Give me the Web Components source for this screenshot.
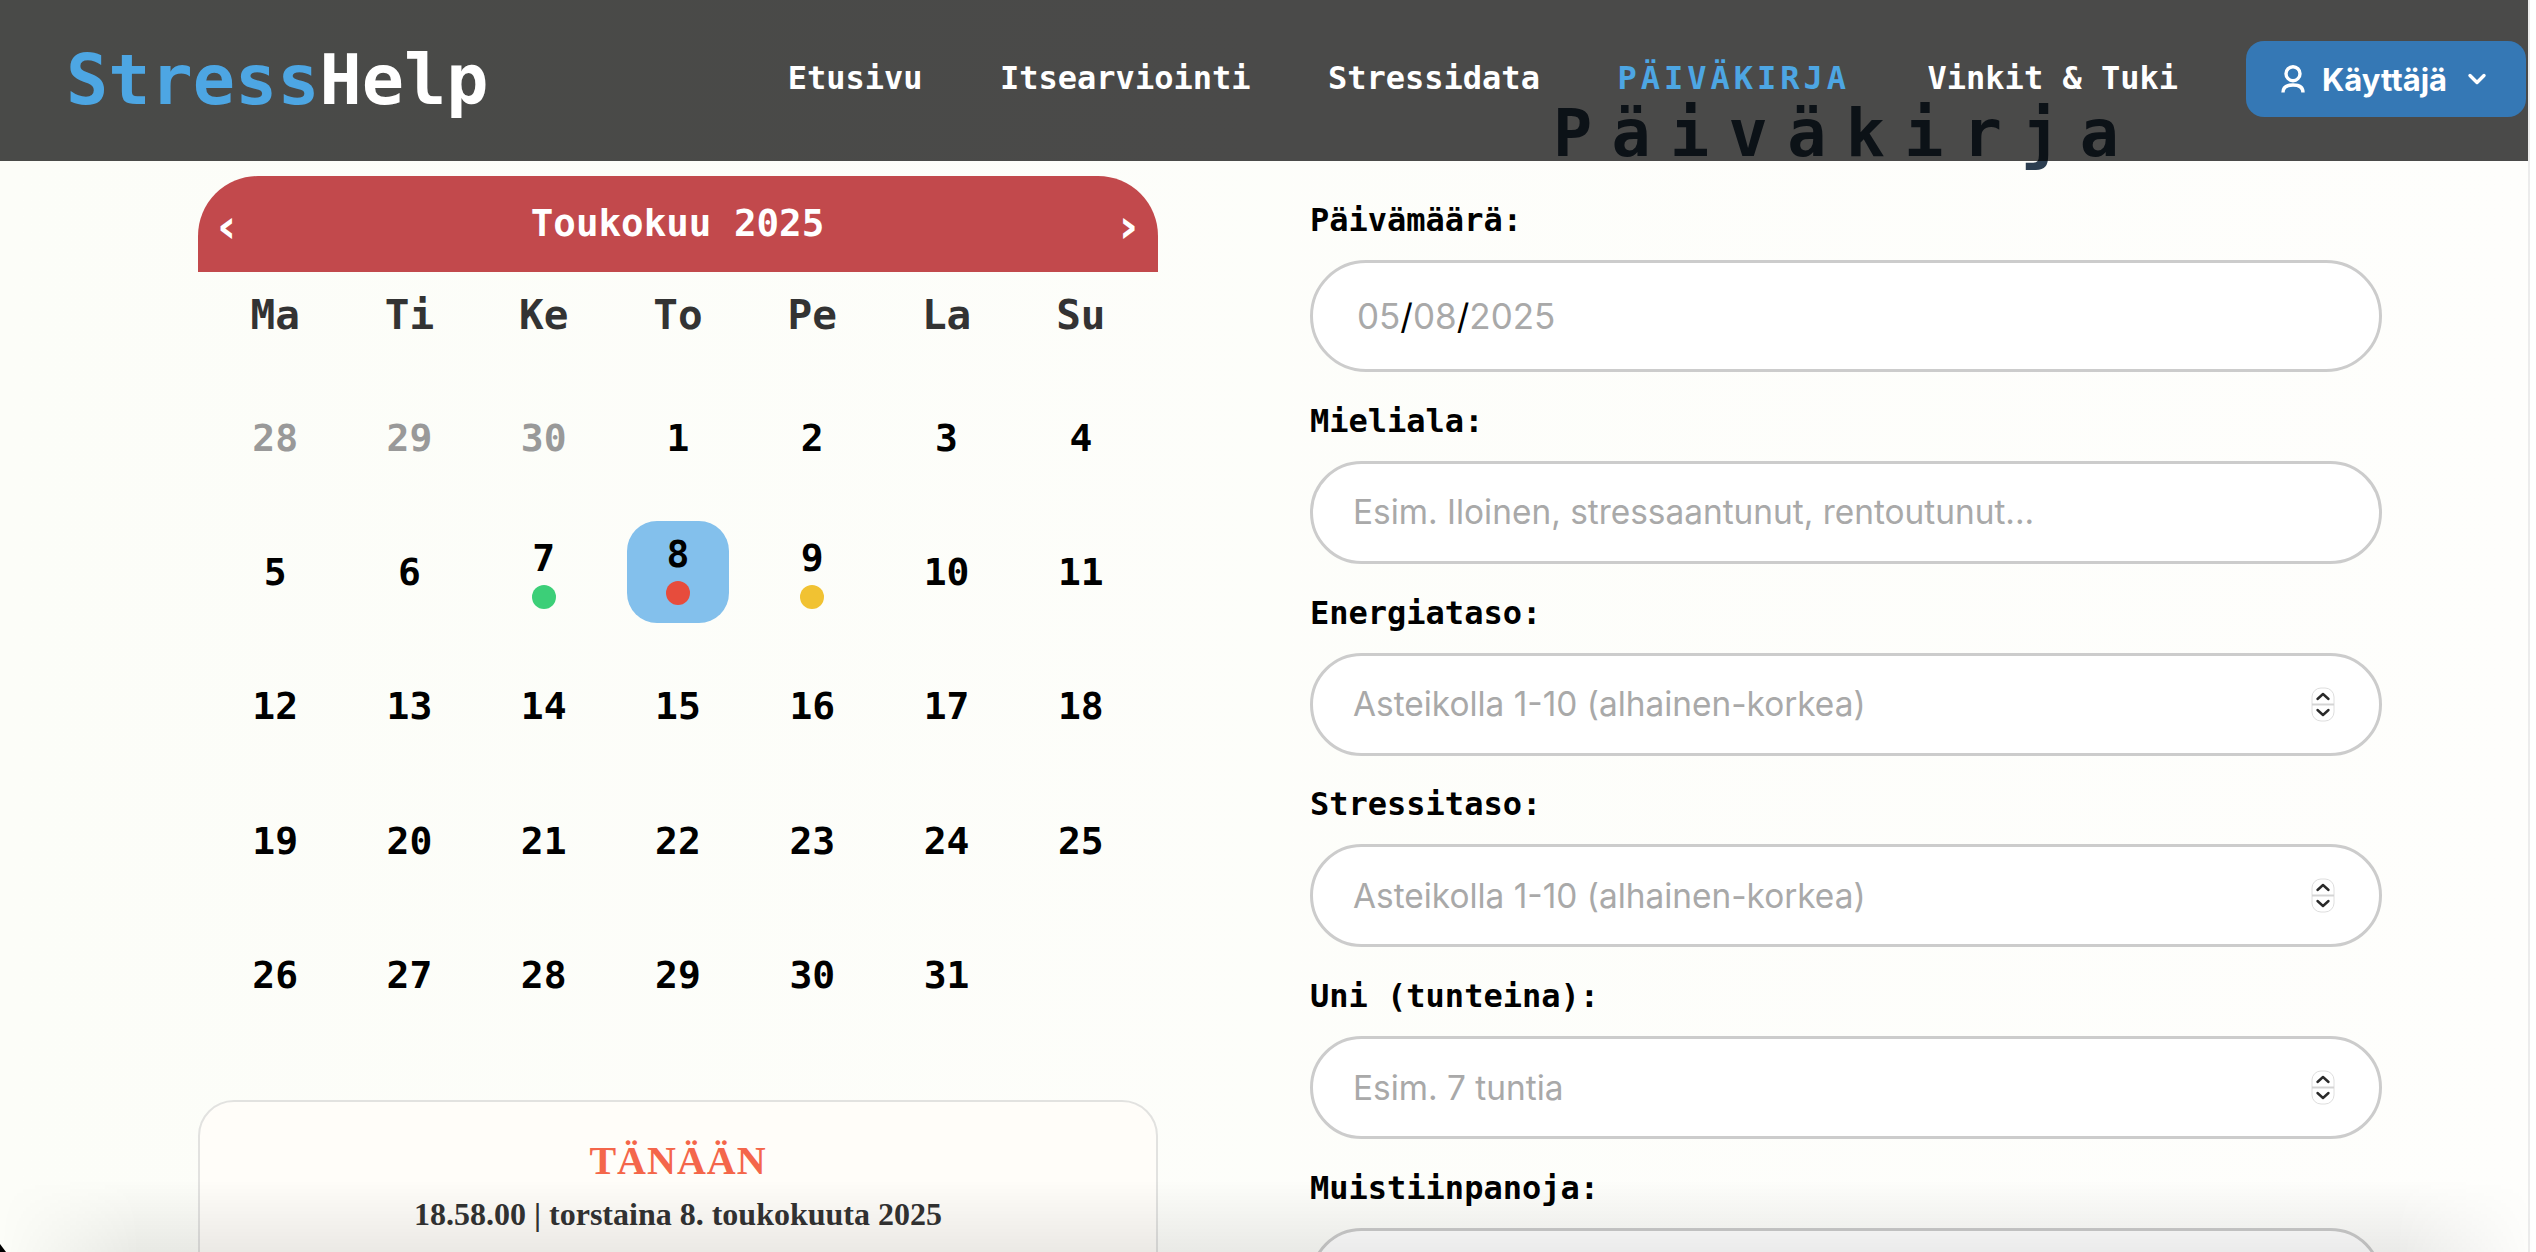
<!DOCTYPE html>
<html lang="fi">
<head>
<meta charset="utf-8">
<title>StressHelp</title>
<style>
  html, body { margin: 0; height: 100%; overflow: hidden; background: #fdfef9; }
</style>
</head>
<body>
<stress-page></stress-page>
<script>
const MONO = `'DejaVu Sans Mono', monospace`

class StressHeader extends HTMLElement {
  connectedCallback() {
    this.attachShadow({ mode: 'open' })
    this.shadowRoot.innerHTML = `
      <style>
        :host {
          position: absolute;
          top: 0; left: 0; right: 8px;
          height: 161px;
          z-index: 5;
          display: flex;
          align-items: center;
          box-sizing: border-box;
          padding: 0 2px 0 66px;
          background: rgba(0, 0, 0, 0.71);
          font-family: ${MONO};
          font-weight: bold;
        }
        .logo { font-size: 70.2px; color: #fff; margin-top: -2px; }
        .logo span { color: #4da6e3; }
        nav { margin-left: auto; display: flex; align-items: center; gap: 77.5px; margin-top: -5px; }
        a { font-size: 32px; color: #fff; }
        a.on { color: #4da6e3; text-transform: uppercase; letter-spacing: 4px; }
        .user {
          margin: -3px 0 0 68px;
          width: 280px; height: 76px;
          box-sizing: border-box;
          padding-left: 35px;
          display: flex; align-items: center;
          border-radius: 18px;
          background: #3578b5;
          color: #fff;
          font-family: Inter, sans-serif;
          font-size: 31px;
        }
        .user svg { flex-shrink: 0; }
        .name { margin-left: 17px; }
        .caret { margin-left: 20px; }
      </style>
      <div class="logo"><span>Stress</span>Help</div>
      <nav>
        <a>Etusivu</a><a>Itsearviointi</a><a>Stressidata</a><a class="on">Päiväkirja</a><a>Vinkit &amp; Tuki</a>
      </nav>
      <div class="user">
        <svg width="24" height="28" viewBox="0 0 24 28" fill="none" stroke="#fff" stroke-width="3.4">
          <circle cx="12" cy="8.700" r="7"/>
          <path d="M2 27.500c0-5 4-7.500 10-7.500s10 2.500 10 7.500"/>
        </svg>
        <span class="name">Käyttäjä</span>
        <svg class="caret" width="20" height="14" viewBox="0 0 20 14" fill="none" stroke="#fff" stroke-width="3.4" stroke-linecap="round" stroke-linejoin="round">
          <path d="M3 3.500l7 7 7-7"/>
        </svg>
      </div>
    `
  }
}

class CalDay extends HTMLElement {
  connectedCallback() {
    const dot = this.getAttribute('dot')
    this.attachShadow({ mode: 'open' })
    this.shadowRoot.innerHTML = `
      <style>
        :host {
          height: 134.400px;
          display: flex;
          align-items: center;
          justify-content: center;
          font-size: 38px;
          font-weight: bold;
          color: #000;
        }
        :host([muted]) { color: #999; }
        .cell {
          width: 102px; height: 102px;
          box-sizing: border-box;
          display: flex; flex-direction: column;
          align-items: center; justify-content: center;
          border-radius: 30px;
        }
        :host([selected]) .cell { background: #83c0ec; padding-bottom: 8px; }
        .num { line-height: 44px; }
        .dot { width: 24px; height: 24px; border-radius: 50%; margin-top: 5px; background: ${dot || 'transparent'}; display: ${dot ? 'block' : 'none'}; }
      </style>
      <div class="cell"><span class="num"><slot></slot></span><span class="dot"></span></div>
    `
  }
}

class StressCalendar extends HTMLElement {
  connectedCallback() {
    const head = ['Ma', 'Ti', 'Ke', 'To', 'Pe', 'La', 'Su'].map((d) => `<div class="wd">${d}</div>`).join('')
    const dots = { 7: '#3ccf78', 8: '#e74c3c', 9: '#f1c232' }
    let days = [28, 29, 30].map((d) => `<cal-day muted>${d}</cal-day>`).join('')
    for (let d = 1; d <= 31; d++) {
      const dot = dots[d] ? ` dot="${dots[d]}"` : ''
      days += `<cal-day${dot}${d === 8 ? ' selected' : ''}>${d}</cal-day>`
    }
    this.attachShadow({ mode: 'open' })
    this.shadowRoot.innerHTML = `
      <style>
        :host { display: block; font-family: ${MONO}; }
        header {
          height: 96px;
          display: flex; align-items: center; justify-content: space-between;
          box-sizing: border-box;
          padding: 0 20px 0 19px;
          border-radius: 60px 60px 0 0;
          background: #c2494c;
          color: #fff;
          font-weight: bold;
        }
        .title { font-size: 37.500px; margin-top: -3px; }
        .arrow { font-size: 47px; font-family: 'DejaVu Sans', sans-serif; font-weight: bold; margin-top: 3px; }
        .grid { display: grid; grid-template-columns: repeat(7, 1fr); padding: 0 10px; }
        .wd { height: 86px; display: flex; align-items: center; justify-content: center; font-size: 41px; font-weight: bold; color: #333; }
        .days { grid-column: 1 / -1; display: grid; grid-template-columns: repeat(7, 1fr); margin-top: 12.500px; }
      </style>
      <header>
        <span class="arrow">‹</span>
        <span class="title">Toukokuu 2025</span>
        <span class="arrow">›</span>
      </header>
      <div class="grid">${head}<div class="days">${days}</div></div>
    `
  }
}

class TodayCard extends HTMLElement {
  connectedCallback() {
    this.attachShadow({ mode: 'open' })
    this.shadowRoot.innerHTML = `
      <style>
        :host {
          display: block;
          margin-top: 58px;
          height: 400px;
          box-sizing: border-box;
          padding-top: 36px;
          border: 2px solid #e2e2e0;
          border-radius: 36px;
          background: #fffdf9;
          text-align: center;
          font-family: 'Liberation Serif', serif;
          font-weight: bold;
        }
        .h { font-size: 40px; line-height: 46px; letter-spacing: 1px; color: #f4664a; }
        .t { font-size: 32px; line-height: 40px; margin-top: 10px; color: #333; }
      </style>
      <div class="h">TÄNÄÄN</div>
      <div class="t">18.58.00 | torstaina 8. toukokuuta 2025</div>
    `
  }
}

class FormField extends HTMLElement {
  connectedCallback() {
    const spinner = this.hasAttribute('spinner') ? `
      <svg class="spin" width="24" height="35" viewBox="0 0 24 35" fill="none">
        <rect x="1" y="1" width="22" height="33" rx="9" fill="#fff" stroke="#dedede"/>
        <path d="M1 17.500h22" stroke="#d4d4d4" stroke-width="2"/>
        <path d="M6.500 12l5.500-5 5.500 5M6.500 23l5.500 5 5.500-5" stroke="#2a2a2a" stroke-width="2.400" stroke-linecap="round" stroke-linejoin="round"/>
      </svg>` : ''
    this.attachShadow({ mode: 'open' })
    this.shadowRoot.innerHTML = `
      <style>
        :host { display: block; margin-bottom: 24.800px; }
        label {
          display: block;
          height: 48px;
          line-height: 48px;
          margin-bottom: 16px;
          font-family: ${MONO};
          font-size: 32px;
          font-weight: bold;
          color: #000;
        }
        .box {
          height: 103px;
          display: flex; align-items: center; justify-content: space-between;
          box-sizing: border-box;
          padding: 0 44px 0 40px;
          border: 3px solid #ccc;
          border-radius: 52px;
          background: #fff;
          font-family: Inter, sans-serif;
          font-size: 33.400px;
          color: #a9a9a9;
        }
        :host([tall]) .box { height: 112px; padding-left: 44px; border-radius: 56px; font-size: 35px; }
      </style>
      <label>${this.getAttribute('label')}</label>
      <div class="box"><span><slot></slot></span>${spinner}</div>
    `
  }
}

class DiaryForm extends HTMLElement {
  connectedCallback() {
    this.attachShadow({ mode: 'open' })
    this.shadowRoot.innerHTML = `
      <style>
        :host { display: block; }
        h1 {
          margin: 0 0 12px 243px;
          height: 100px;
          line-height: 100px;
          font-family: ${MONO};
          font-size: 65px;
          font-weight: bold;
          letter-spacing: 19.400px;
          white-space: nowrap;
          color: #2c3e50;
        }
        b { font-weight: normal; color: #000; }
      </style>
      <h1>Päiväkirja</h1>
      <form-field tall label="Päivämäärä:">05<b>/</b>08<b>/</b>2025</form-field>
      <form-field label="Mieliala:">Esim. Iloinen, stressaantunut, rentoutunut...</form-field>
      <form-field label="Energiataso:" spinner>Asteikolla 1-10 (alhainen-korkea)</form-field>
      <form-field label="Stressitaso:" spinner>Asteikolla 1-10 (alhainen-korkea)</form-field>
      <form-field label="Uni (tunteina):" spinner>Esim. 7 tuntia</form-field>
      <form-field label="Muistiinpanoja:"></form-field>
    `
  }
}

class StressPage extends HTMLElement {
  connectedCallback() {
    this.attachShadow({ mode: 'open' })
    this.shadowRoot.innerHTML = `
      <style>
        :host {
          display: block; position: relative; height: 100vh; overflow: hidden;
          background: linear-gradient(to right, #fcfdf8, #fefefc);
        }
        main {
          display: grid;
          grid-template-columns: 960px 1072px;
          column-gap: 152px;
          align-items: start;
          box-sizing: border-box;
          padding: 84px 0 0 198px;
        }
        .left { margin-top: 92px; }
        .edge {
          position: absolute; top: 0; right: 0; bottom: 0; width: 8px; z-index: 6;
          box-sizing: border-box;
          border-left: 2px solid #ececec;
          background: #fff;
        }
        .shade {
          position: absolute; left: 0; right: 0; bottom: 0; height: 72px; z-index: 7;
          background: linear-gradient(rgba(0,0,0,0), rgba(0,0,0,0.08));
          -webkit-mask-image: linear-gradient(to right, transparent 0, #000 140px, #000 calc(100% - 140px), transparent 100%);
          mask-image: linear-gradient(to right, transparent 0, #000 140px, #000 calc(100% - 140px), transparent 100%);
          pointer-events: none;
        }
        .corner {
          position: absolute; left: 0; bottom: 0; width: 6px; height: 8px; z-index: 8;
          background: #000;
          clip-path: polygon(0 0, 100% 100%, 0 100%);
        }
      </style>
      <stress-header></stress-header>
      <main>
        <div class="left">
          <stress-calendar></stress-calendar>
          <today-card></today-card>
        </div>
        <diary-form></diary-form>
      </main>
      <div class="edge"></div>
      <div class="shade"></div>
      <div class="corner"></div>
    `
  }
}

customElements.define('stress-header', StressHeader)
customElements.define('cal-day', CalDay)
customElements.define('stress-calendar', StressCalendar)
customElements.define('today-card', TodayCard)
customElements.define('form-field', FormField)
customElements.define('diary-form', DiaryForm)
customElements.define('stress-page', StressPage)
</script>
</body>
</html>
